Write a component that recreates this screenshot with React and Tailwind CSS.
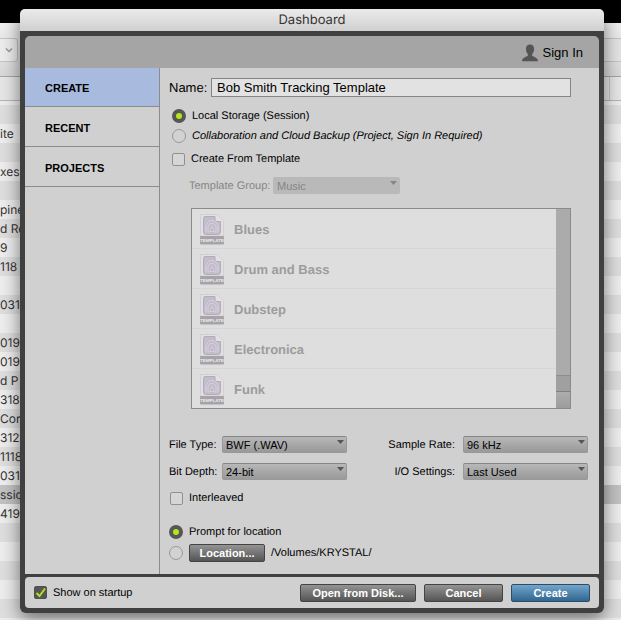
import {useId, useState} from 'react';
import clsx from 'clsx';

const TABS = ['CREATE', 'RECENT', 'PROJECTS'];

const TEMPLATES = ['Blues', 'Drum and Bass', 'Dubstep', 'Electronica', 'Funk'];

// Rows of the file browser behind the dialog
const FILES = [
    '',
    'ite',
    '',
    'xes',
    '',
    'pine:',
    'd Re',
    '9',
    '118',
    '',
    '0313',
    '',
    '019',
    '019',
    'd P',
    '318',
    'Cor',
    '3121',
    '1118',
    '0313',
    'ssion',
    '419',
    '',
    '',
    '',
    '',
    '',
];

const SELECTED_FILE = 20;

const Browser = () => (
    <div className="absolute inset-0 overflow-hidden bg-[#ededed] font-['Inter','Liberation_Sans',sans-serif]">
        <div className="h-[23px] bg-black" />
        <div className="flex h-[54px] items-center justify-between border-b border-[#a5a5a5] bg-linear-to-b from-[#f0f0f0] to-[#d8d8d8]">
            <div className="flex h-6 w-[18px] items-center justify-end rounded-r-sm border border-l-0 border-[#c4c4c4] bg-[#ececec] pr-1">
                <svg className="h-2 w-2" viewBox="0 0 8 8" fill="none" stroke="#999" strokeWidth="1.5">
                    <path d="M1 2.5 4 5.5 7 2.5" />
                </svg>
            </div>
            <div className="h-6 w-5 border-y border-[#c4c4c4] bg-[#e4e4e4]" />
        </div>
        <div className="flex h-6 justify-end border-b border-[#b5b5b5] bg-[#e6e6e6]">
            <div className="w-3 border-l border-[#c8c8c8]" />
        </div>
        <div className="h-1 bg-[#ededed]" />
        {FILES.map((name, index) => (
            <div
                key={index}
                className={clsx(
                    'flex h-[19px] items-center text-xs whitespace-nowrap text-[#333]',
                    index === SELECTED_FILE ? 'bg-[#c2c2c2]' : index % 2 ? 'bg-[#ededed]' : 'bg-[#dedede]'
                )}
            >
                {name}
            </div>
        ))}
    </div>
);

const UserIcon = () => (
    <svg className="h-[18px] w-4" viewBox="0 0 16 18" fill="#555">
        <path d="M8 .5c2.7 0 4.1 1.8 4.1 4.4 0 2-.7 3.900-1.900 5v1.600c0 1.200 5.800 1.500 5.800 5.800H0c0-4.300 5.800-4.600 5.800-5.800V9.900c-1.200-1.100-1.900-3-1.900-5C3.900 2.300 5.300.5 8 .5Z" />
    </svg>
);

const TemplateIcon = () => (
    <svg className="h-[31px] w-6" viewBox="0 0 24 31" fill="none">
        <path d="M.5 22V.5H17.500L23.500 6.500V22Z" fill="#e2e0e4" stroke="#d0d0d0" />
        <path
            d="M5 2.500H15V5.500Q15 7.500 17 7.500H20.500V18Q20.500 20.500 18 20.500H5.500Q3.500 20.500 3.500 18V4.500Q3.500 2.500 5 2.500Z"
            fill="#c3bccb"
            stroke="#b3acb9"
        />
        <g stroke="#ddd6e2" strokeWidth=".8">
            <path d="M6.500 18.500C4.500 12 7 6.500 12 6.500S19.500 12 17.500 18.500" />
            <path d="M8.500 18.500C6.800 13 8.500 9.500 12 9.500S17.200 13 15.500 18.500" />
            <path d="M10 17.500 12 12.500 14 17.500Z" fill="#b5acbf" />
        </g>
        <rect y="22" width="24" height="8.500" rx="1" fill="#a6a3a9" />
        <text
            x="12"
            y="28"
            textAnchor="middle"
            fontSize="4.500"
            fontWeight="700"
            fill="#ededed"
            fontFamily="Liberation Sans, sans-serif"
        >
            TEMPLATE
        </text>
    </svg>
);

const Radio = ({label, italic, ...props}) => (
    <label className={clsx('flex h-5 items-center gap-1.5', italic && 'italic')}>
        <input
            type="radio"
            className="size-3.5 shrink-0 appearance-none rounded-full border border-[#999] bg-[#d2d2d2] checked:border-4 checked:border-[#565656] checked:bg-[#b4e61e]"
            {...props}
        />
        {label}
    </label>
);

const Checkbox = ({label, ...props}) => (
    <label className="flex h-5 items-center gap-1.5">
        <span className="relative flex size-[13px] shrink-0">
            <input
                type="checkbox"
                className="peer size-[13px] appearance-none rounded-xs border border-[#909090] bg-[#d6d6d6] checked:border-[#505050] checked:bg-[#555]"
                {...props}
            />
            <svg
                className="pointer-events-none absolute inset-0 hidden size-[13px] peer-checked:block"
                viewBox="0 0 13 13"
                fill="none"
                stroke="#b0e020"
                strokeWidth="2"
            >
                <path d="M2.5 7 5.5 10 11 2.5" />
            </svg>
        </span>
        {label}
    </label>
);

const Select = ({label, value, labelClass, className, disabled}) => {
    const id = useId();

    return (
        <div className={clsx('flex h-[17px] items-center', disabled && 'text-[#858585]')}>
            <label htmlFor={id} className={clsx('shrink-0 whitespace-nowrap', labelClass)}>
                {label}
            </label>
            <div className={clsx('relative', className)}>
                <select
                    id={id}
                    disabled={disabled}
                    className={clsx(
                        'block h-[17px] w-full appearance-none rounded-xs',
                        disabled
                            ? 'bg-[#b9b9b9] px-1'
                            : 'border border-[#989898] border-t-[#858585] bg-linear-to-b from-[#b8b8b8] to-[#999] px-[3px]'
                    )}
                >
                    <option>{value}</option>
                </select>
                <svg
                    className="pointer-events-none absolute top-1 right-[3px] h-1 w-[7px]"
                    viewBox="0 0 7 4"
                    fill={disabled ? '#858585' : '#555'}
                >
                    <path d="M0 0H7L3.5 4Z" />
                </svg>
            </div>
        </div>
    );
};

const Button = ({className, primary, children}) => (
    <button
        type="button"
        className={clsx(
            'flex items-center justify-center rounded-xs border font-bold text-white',
            primary
                ? 'border-[#2d4d66] bg-linear-to-b from-[#72a6cb] to-[#306690]'
                : 'border-[#444] bg-linear-to-b from-[#949494] to-[#555]',
            className
        )}
    >
        {children}
    </button>
);

const TemplateList = () => (
    <div className="mt-3.5 mr-[17px] ml-[22px] flex h-[201px] border border-[#8a8a8a] bg-[#dedede]">
        <ul className="flex-1 overflow-hidden">
            {TEMPLATES.map((name) => (
                <li
                    key={name}
                    className="flex h-10 items-center gap-2.5 border-b border-[#d6d6d6] pt-0.5 pl-2 text-[13px] font-bold text-[#9c9c9c]"
                >
                    <TemplateIcon />
                    {name}
                </li>
            ))}
        </ul>
        <div className="flex w-3.5 flex-col justify-end bg-[#ababab]">
            <div className="h-4 border-t border-[#8d8d8d] bg-[#a0a0a0]" />
            <div className="h-[17px] border-t border-[#808080] bg-linear-to-b from-[#adadad] to-[#9c9c9c]" />
        </div>
    </div>
);

const CreatePanel = () => {
    const [name, setName] = useState('Bob Smith Tracking Template');

    return (
        <main className="min-w-0 flex-1 pt-2.5 pr-[11px] pb-[11px] pl-[9px]">
            <div className="mr-[17px] flex h-[19px] items-center">
                <label htmlFor="session-name" className="w-[42px] shrink-0 text-[13px]">
                    Name:
                </label>
                <input
                    id="session-name"
                    type="text"
                    value={name}
                    onChange={(event) => setName(event.target.value)}
                    className="h-[19px] min-w-0 flex-1 border border-[#858585] bg-[#e2e2e2] px-[5px] text-[13px]"
                />
            </div>

            <div className="mt-[9px] pl-[3px]">
                <Radio name="storage" label="Local Storage (Session)" defaultChecked />
                <Radio
                    name="storage"
                    label="Collaboration and Cloud Backup (Project, Sign In Required)"
                    italic
                />
                <div className="mt-[3px]">
                    <Checkbox label="Create From Template" />
                </div>
            </div>

            <div className="mt-2 pl-5">
                <Select
                    label="Template Group:"
                    value="Music"
                    labelClass="w-[84px]"
                    className="w-[127px]"
                    disabled
                />
            </div>

            <TemplateList />

            <div className="mt-[27px] flex justify-between">
                <div className="flex flex-col gap-2.5">
                    <Select label="File Type:" value="BWF (.WAV)" labelClass="w-[53px]" className="w-[125px]" />
                    <Select label="Bit Depth:" value="24-bit" labelClass="w-[53px]" className="w-[125px]" />
                </div>
                <div className="flex flex-col gap-2.5">
                    <Select
                        label="Sample Rate:"
                        value="96 kHz"
                        labelClass="w-20 pr-2 text-right"
                        className="w-[125px]"
                    />
                    <Select
                        label="I/O Settings:"
                        value="Last Used"
                        labelClass="w-20 pr-2 text-right"
                        className="w-[125px]"
                    />
                </div>
            </div>

            <div className="mt-2 pl-px">
                <Checkbox label="Interleaved" />
            </div>

            <div className="mt-3.5">
                <Radio name="location" label="Prompt for location" defaultChecked />
                <div className="mt-px flex items-center gap-1.5">
                    <Radio name="location" aria-label="Fixed location" />
                    <Button className="h-[18px] w-[76px]">Location...</Button>
                    <span>/Volumes/KRYSTAL/</span>
                </div>
            </div>
        </main>
    );
};

const Dashboard = () => {
    const [tab, setTab] = useState('CREATE');

    return (
        <div className="relative mt-[9px] mr-[17px] mb-[7px] ml-5 rounded-md bg-[#404040] shadow-[0_6px_18px_rgba(0,0,0,0.5)]">
            <h1 className="flex h-[22px] items-center justify-center rounded-t-[5px] bg-linear-to-b from-[#ebebeb] to-[#d0d0d0] font-['Inter','Liberation_Sans',sans-serif] text-[13px] text-[#333]">
                Dashboard
            </h1>
            <div className="p-[5px]">
                <header className="flex h-8 items-center justify-end rounded-t-[5px] bg-[#a5a5a5] pr-4">
                    <button type="button" className="flex items-center gap-[5px] pt-0.5 text-[13px]">
                        <UserIcon />
                        Sign In
                    </button>
                </header>

                <div className="flex bg-[#d0d0d0]">
                    <nav className="w-[135px] shrink-0 border-r border-[#8c8c8c]">
                        {TABS.map((item) => (
                            <button
                                key={item}
                                type="button"
                                onClick={() => setTab(item)}
                                className={clsx(
                                    'block w-full border-b border-[#8c8c8c] pt-0.5 pl-5 text-left font-bold',
                                    item === tab ? 'h-[39px] bg-[#a8badd]' : 'h-10'
                                )}
                            >
                                {item}
                            </button>
                        ))}
                    </nav>
                    <CreatePanel />
                </div>

                <footer className="mt-[3px] flex h-[31px] items-center justify-between rounded-sm bg-[#d0d0d0] px-[9px]">
                    <Checkbox label="Show on startup" defaultChecked />
                    <div className="flex gap-2">
                        <Button className="h-[18px] w-[116px]">Open from Disk...</Button>
                        <Button className="h-[18px] w-[79px]">Cancel</Button>
                        <Button className="h-[18px] w-[79px]" primary>
                            Create
                        </Button>
                    </div>
                </footer>
            </div>
        </div>
    );
};

export default function App() {
    return (
        <div className="relative flow-root min-h-screen overflow-hidden font-['Liberation_Sans',Arial,sans-serif] text-[11px] leading-4 text-black [text-rendering:geometricPrecision]">
            <Browser />
            <Dashboard />
        </div>
    );
}
